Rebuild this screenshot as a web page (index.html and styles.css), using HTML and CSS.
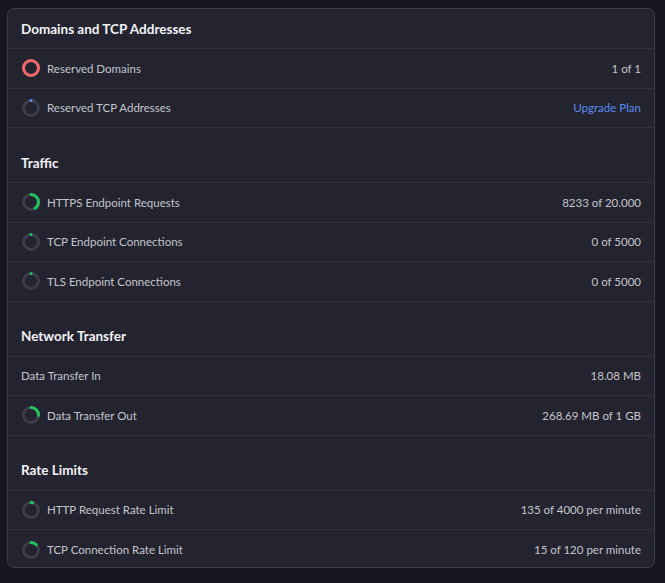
FILE: index.html
```html
<!DOCTYPE html>
<html>
<head>
<meta charset="utf-8">
<link rel="stylesheet" href="styles.css">
</head>
<body>
<div class="card">
  <div class="section first">Domains and TCP Addresses</div>
  <div class="row">
    <div class="label"><svg class="ring" viewBox="0 0 20 20"><circle cx="10" cy="10" r="7.5" class="track"/><circle cx="10" cy="10" r="7.5" class="arc red" pathLength="100" stroke-dasharray="100 100" transform="rotate(-90 10 10)"/></svg>Reserved Domains</div>
    <div class="value">1 of 1</div>
  </div>
  <div class="row">
    <div class="label"><svg class="ring" viewBox="0 0 20 20"><circle cx="10" cy="10" r="7.5" class="track"/><circle cx="10" cy="10" r="7.5" class="arc blue" pathLength="100" stroke-dasharray="0.01 100" transform="rotate(-90 10 10)"/></svg>Reserved TCP Addresses</div>
    <div class="value link">Upgrade Plan</div>
  </div>

  <div class="section">Traffic</div>
  <div class="row">
    <div class="label"><svg class="ring" viewBox="0 0 20 20"><circle cx="10" cy="10" r="7.5" class="track"/><circle cx="10" cy="10" r="7.5" class="arc green" pathLength="100" stroke-dasharray="41 100" transform="rotate(-90 10 10)"/></svg>HTTPS Endpoint Requests</div>
    <div class="value">8233 of 20.000</div>
  </div>
  <div class="row">
    <div class="label"><svg class="ring" viewBox="0 0 20 20"><circle cx="10" cy="10" r="7.5" class="track"/><circle cx="10" cy="10" r="7.5" class="arc green" pathLength="100" stroke-dasharray="0.01 100" transform="rotate(-90 10 10)"/></svg>TCP Endpoint Connections</div>
    <div class="value">0 of 5000</div>
  </div>
  <div class="row">
    <div class="label"><svg class="ring" viewBox="0 0 20 20"><circle cx="10" cy="10" r="7.5" class="track"/><circle cx="10" cy="10" r="7.5" class="arc green" pathLength="100" stroke-dasharray="0.01 100" transform="rotate(-90 10 10)"/></svg>TLS Endpoint Connections</div>
    <div class="value">0 of 5000</div>
  </div>

  <div class="section">Network Transfer</div>
  <div class="row">
    <div class="label">Data Transfer In</div>
    <div class="value">18.08 MB</div>
  </div>
  <div class="row">
    <div class="label"><svg class="ring" viewBox="0 0 20 20"><circle cx="10" cy="10" r="7.5" class="track"/><circle cx="10" cy="10" r="7.5" class="arc green" pathLength="100" stroke-dasharray="26 100" transform="rotate(-90 10 10)"/></svg>Data Transfer Out</div>
    <div class="value">268.69 MB of 1 GB</div>
  </div>

  <div class="section">Rate Limits</div>
  <div class="row">
    <div class="label"><svg class="ring" viewBox="0 0 20 20"><circle cx="10" cy="10" r="7.5" class="track"/><circle cx="10" cy="10" r="7.5" class="arc green" pathLength="100" stroke-dasharray="3.4 100" transform="rotate(-90 10 10)"/></svg>HTTP Request Rate Limit</div>
    <div class="value">135 of 4000 per minute</div>
  </div>
  <div class="row last">
    <div class="label"><svg class="ring" viewBox="0 0 20 20"><circle cx="10" cy="10" r="7.5" class="track"/><circle cx="10" cy="10" r="7.5" class="arc green" pathLength="100" stroke-dasharray="12.5 100" transform="rotate(-90 10 10)"/></svg>TCP Connection Rate Limit</div>
    <div class="value">15 of 120 per minute</div>
  </div>
</div>
</body>
</html>
```
FILE: styles.css
```css
html, body {
  margin: 0;
  background: #17171f;
}
body {
  padding: 8px 10px 15px 7px;
  font-family: "Lato", "Noto Sans", sans-serif;
}
.card {
  background: #23242f;
  border: 1px solid #3a3c4b;
  border-radius: 7px;
  box-sizing: border-box;
  width: 648px;
  height: 560px;
  overflow: hidden;
}
.section {
  color: #f2f2f5;
  font-weight: 700;
  font-size: 13.5px;
  padding: 15px 13px 0 13px;
  height: 55px;
  box-sizing: border-box;
  border-bottom: 1px solid #31323f;
  display: flex;
  align-items: center;
}
.section.first {
  padding-top: 0;
  height: 40px;
}
.row {
  height: 39.5px;
  box-sizing: border-box;
  border-bottom: 1px solid #31323f;
  display: flex;
  align-items: center;
  justify-content: space-between;
  padding: 0 13px 0 13px;
  color: #c5c5cd;
  font-size: 11.5px;
}
.row.last {
  border-bottom: none;
}
.label {
  display: flex;
  align-items: center;
}
.ring {
  width: 20px;
  height: 20px;
  margin-right: 6px;
}
.track {
  fill: none;
  stroke: #3b3d4b;
  stroke-width: 3;
}
.arc {
  fill: none;
  stroke-width: 3;
  stroke-linecap: round;
}
.red { stroke: #f1676a; }
.green { stroke: #22c35a; }
.blue { stroke: #5a8cf2; }
.value.link {
  color: #5b8def;
}
```
